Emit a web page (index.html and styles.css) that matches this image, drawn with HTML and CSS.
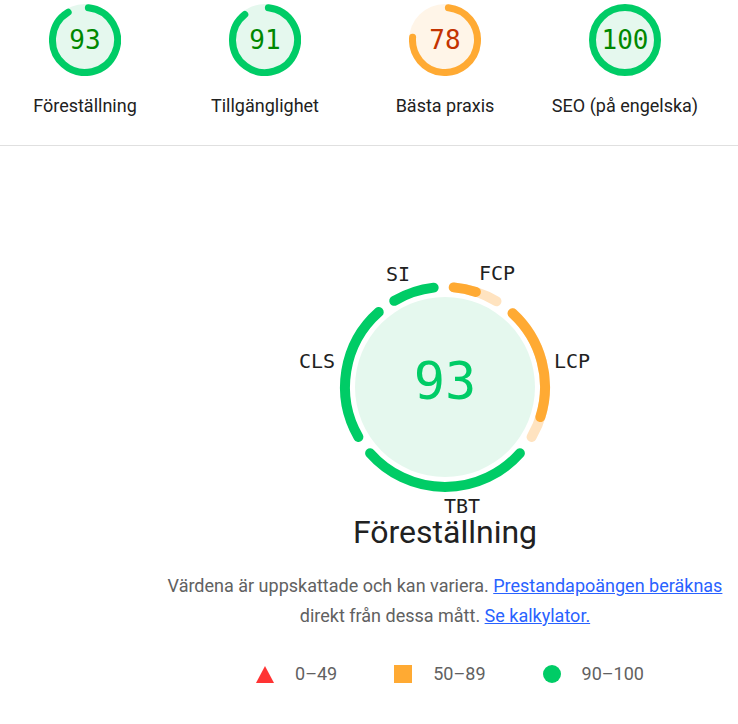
FILE: index.html
```html
<!DOCTYPE html>
<html lang="sv">
<head>
<meta charset="utf-8">
<title>Lighthouse</title>
<link rel="stylesheet" href="styles.css">
</head>
<body>
<div class="gauges">
  <div class="gauge">
    <div class="gauge-circle">
      <svg class="gauge-svg" width="72" height="72" viewBox="0 0 72 72">
        <circle cx="36" cy="36" r="36" class="fill-pass"/>
        <path d="M39.40 3.68 A32.5 32.5 0 1 1 19.17 8.20" class="arc arc-pass"/>
      </svg>
      <div class="gauge-num num-pass">93</div>
    </div>
    <div class="gauge-label">Föreställning</div>
  </div>
  <div class="gauge">
    <div class="gauge-circle">
      <svg class="gauge-svg" width="72" height="72" viewBox="0 0 72 72">
        <circle cx="36" cy="36" r="36" class="fill-pass"/>
        <path d="M39.40 3.68 A32.5 32.5 0 1 1 15.81 10.53" class="arc arc-pass"/>
      </svg>
      <div class="gauge-num num-pass">91</div>
    </div>
    <div class="gauge-label">Tillgänglighet</div>
  </div>
  <div class="gauge">
    <div class="gauge-circle">
      <svg class="gauge-svg" width="72" height="72" viewBox="0 0 72 72">
        <circle cx="36" cy="36" r="36" class="fill-average"/>
        <path d="M39.40 3.68 A32.5 32.5 0 1 1 3.61 33.28" class="arc arc-average"/>
      </svg>
      <div class="gauge-num num-average">78</div>
    </div>
    <div class="gauge-label">Bästa praxis</div>
  </div>
  <div class="gauge">
    <div class="gauge-circle">
      <svg class="gauge-svg" width="72" height="72" viewBox="0 0 72 72">
        <circle cx="36" cy="36" r="36" class="fill-pass"/>
        <circle cx="36" cy="36" r="32.5" class="arc arc-pass"/>
      </svg>
      <div class="gauge-num num-pass">100</div>
    </div>
    <div class="gauge-label">SEO (på engelska)</div>
  </div>
</div>

<div class="perf">
  <div class="metrics-gauge">
    <svg class="metrics-svg" width="240" height="240" viewBox="0 0 240 240">
      <circle cx="120" cy="120" r="90" class="fill-pass"/>
      <path d="M128.72 20.38 A100 100 0 0 1 171.50 34.28" class="marc light-average"/>
      <path d="M128.72 20.38 A100 100 0 0 1 150.90 24.89" class="marc dark-average"/>
      <path d="M187.56 46.27 A100 100 0 0 1 206.60 170.00" class="marc light-average"/>
      <path d="M187.56 46.27 A100 100 0 0 1 215.37 150.07" class="marc dark-average"/>
      <path d="M194.90 186.26 A100 100 0 0 1 45.10 186.26" class="marc dark-pass"/>
      <path d="M33.40 170.00 A100 100 0 0 1 53.74 45.10" class="marc dark-pass"/>
      <path d="M69.25 33.84 A100 100 0 0 1 108.68 20.64" class="marc dark-pass"/>
    </svg>
    <div class="metrics-num">93</div>
    <span class="mlabel m-si">SI</span>
    <span class="mlabel m-fcp">FCP</span>
    <span class="mlabel m-lcp">LCP</span>
    <span class="mlabel m-cls">CLS</span>
    <span class="mlabel m-tbt">TBT</span>
  </div>
  <div class="perf-title">Föreställning</div>
  <p class="perf-desc">Värdena är uppskattade och kan variera. <a href="#">Prestandapoängen beräknas</a> direkt från dessa mått. <a href="#">Se kalkylator.</a></p>
  <div class="legend">
    <div class="legend-item"><span class="icon icon-fail"></span><span>0–49</span></div>
    <div class="legend-item"><span class="icon icon-average"></span><span>50–89</span></div>
    <div class="legend-item"><span class="icon icon-pass"></span><span>90–100</span></div>
  </div>
</div>
</body>
</html>
```

FILE: styles.css
```css
html, body {
  margin: 0;
  padding: 0;
  background: #ffffff;
}

body {
  font-family: Roboto, "Liberation Sans", sans-serif;
  color: #212121;
}

/* top category gauges */
.gauges {
  display: flex;
  gap: 10px;
  padding-top: 4px;
  padding-bottom: 27px;
  border-bottom: 1px solid #e0e0e0;
}

.gauge {
  width: 170px;
  display: flex;
  flex-direction: column;
  align-items: center;
}

.gauge-circle {
  display: grid;
  width: 72px;
  height: 72px;
}

.gauge-circle > * {
  grid-area: 1 / 1;
}

.gauge-svg {
  display: block;
}

.gauge-num {
  display: flex;
  align-items: center;
  justify-content: center;
  font-family: "DejaVu Sans Mono", monospace;
  font-size: 26px;
  padding-bottom: 1px;
}

.num-pass { color: #008800; }
.num-average { color: #c33300; }

.fill-pass { fill: #e5f8ee; }
.fill-average { fill: #fff5e8; }

.arc {
  fill: none;
  stroke-width: 7;
  stroke-linecap: round;
}

.arc-pass { stroke: #00cc66; }
.arc-average { stroke: #ffaa33; }

.gauge-label {
  margin-top: 18px;
  font-size: 18px;
  line-height: 24px;
  white-space: nowrap;
  color: #212121;
}

/* performance section */
.perf {
  width: 570px;
  margin-left: 160px;
  padding-top: 121px;
  display: flex;
  flex-direction: column;
  align-items: center;
}

.metrics-gauge {
  position: relative;
  display: grid;
  width: 240px;
  height: 240px;
}

.metrics-gauge > .metrics-svg,
.metrics-gauge > .metrics-num {
  grid-area: 1 / 1;
}

.metrics-svg {
  display: block;
}

.marc {
  fill: none;
  stroke-width: 10;
  stroke-linecap: round;
}

.dark-pass { stroke: #00cc66; }
.dark-average { stroke: #ffaa33; }
.light-average { stroke: #ffe3c0; }

.metrics-num {
  display: flex;
  align-items: center;
  justify-content: center;
  font-family: "DejaVu Sans Mono", monospace;
  font-size: 52px;
  color: #00cc66;
  padding-bottom: 12px;
}

.mlabel {
  position: absolute;
  font-family: "DejaVu Sans Mono", monospace;
  font-size: 20px;
  line-height: 20px;
  color: #212121;
  white-space: nowrap;
}

.m-si { left: 61px; top: -3px; }
.m-fcp { left: 154px; top: -4px; }
.m-lcp { left: 229px; top: 84px; }
.m-cls { left: -26px; top: 84px; }
.m-tbt { left: 119px; top: 229px; }

.perf-title {
  margin-top: 7px;
  font-size: 32px;
  line-height: 36px;
  color: #212121;
}

.perf-desc {
  margin: 21px 0 0;
  font-size: 18px;
  line-height: 30px;
  color: #616161;
  text-align: center;
}

.perf-desc a {
  color: #2962ff;
  text-decoration: underline;
}

.legend {
  margin-top: 31px;
  padding-left: 10px;
  display: flex;
  gap: 57px;
  font-size: 18px;
  line-height: 24px;
  color: #616161;
}

.legend-item {
  display: flex;
  align-items: center;
  gap: 21px;
}

.icon {
  width: 18px;
  height: 18px;
  display: block;
}

.icon-fail {
  width: 0;
  height: 0;
  border-left: 9px solid transparent;
  border-right: 9px solid transparent;
  border-bottom: 17px solid #ff3333;
}

.icon-average {
  background: #ffaa33;
}

.icon-pass {
  background: #00cc66;
  border-radius: 50%;
}
```
